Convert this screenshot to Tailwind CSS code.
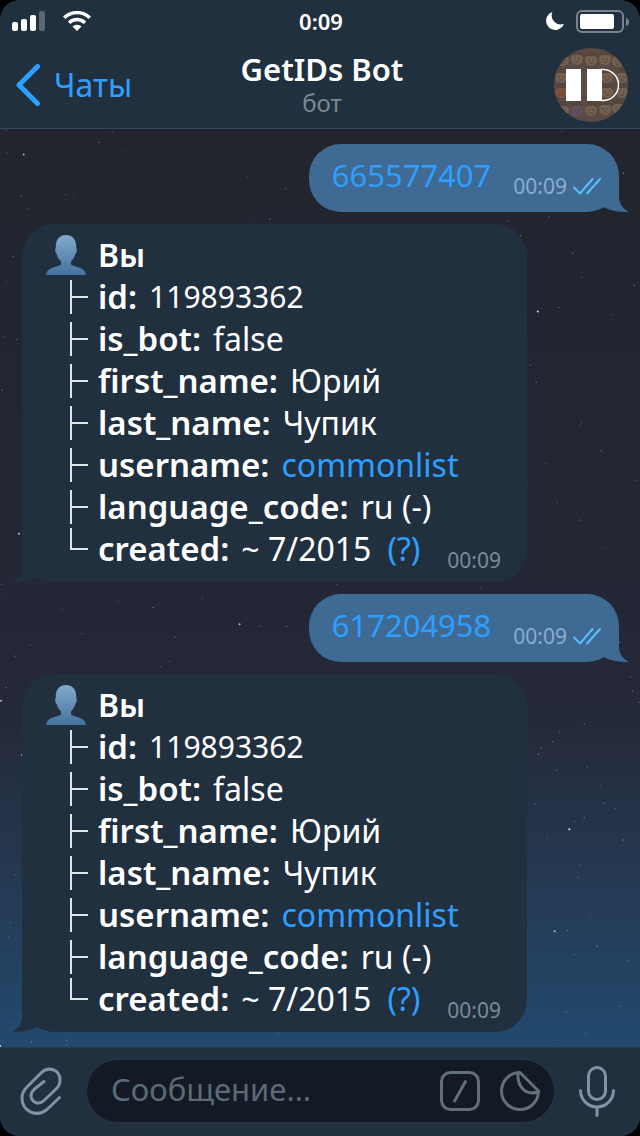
<!DOCTYPE html>
<html lang="ru">
<head>
    <meta charset="UTF-8">
    <meta name="viewport" content="width=device-width, initial-scale=1.0">
    <title>GetIDs Bot</title>
    <script src="https://cdn.jsdelivr.net/npm/@tailwindcss/browser@4"></script>
</head>
<body class="bg-black font-['Noto_Sans','Noto_Sans_CJK_JP',sans-serif]">
<div class="relative isolate min-h-screen flex flex-col rounded-[20px] overflow-hidden bg-linear-to-b from-[#22242e] from-15% via-[#242837] via-62% to-[#214c72] to-94%">

    <!-- Star field -->
    <svg id="stars" class="absolute inset-0 w-full h-full -z-10" aria-hidden="true"></svg>

    <!-- Header -->
    <header class="bg-[#21303f] border-b border-[#34495e] h-[129px] flex flex-col">
        <div class="grid grid-cols-3 items-center h-[42px] pl-3 pr-[10px] text-white">
            <div class="flex items-center gap-[18px]">
                <svg class="w-[33px] h-[20px]" viewBox="0 0 33 20" fill="#fff"><rect x="0" y="11" width="6" height="9" rx="2"/><rect x="9" y="8" width="6" height="12" rx="2"/><rect x="18" y="4" width="6" height="16" rx="2"/><rect x="27" y="0" width="6" height="20" rx="2" fill="#5e6670"/></svg>
                <svg class="w-7 h-5" viewBox="0 0 28 20" fill="none" stroke="#fff" stroke-width="3.4"><path d="M1.2 6.8a18.2 18.2 0 0 1 25.6 0"/><path d="M6 11.8a11.4 11.4 0 0 1 16 0"/><path d="M9.5 15.5a6.4 6.4 0 0 1 9 0L14 20z" fill="#fff" stroke="none"/></svg>
            </div>
            <div class="text-center text-[22px] leading-7 font-semibold">0:09</div>
            <div class="flex items-center justify-end gap-3">
                <svg class="w-[18px] h-[18px]" viewBox="0 0 18 18" fill="#fff"><path d="M6.4 0A9.2 9.2 0 1 0 18 11.8 9 9 0 0 1 6.4 0z"/></svg>
                <svg class="w-[54px] h-[23px]" viewBox="0 0 54 23"><rect x="1" y="1" width="46" height="21" rx="5" fill="none" stroke="#7a838e" stroke-width="2"/><rect x="4" y="4" width="34" height="15" rx="2" fill="#fff"/><path d="M50 8c4 1 4 7 0 8z" fill="#7a838e"/></svg>
            </div>
        </div>
        <div class="grid grid-cols-[1fr_auto_1fr] items-center flex-1 pl-4 pr-3">
            <a href="#" class="flex items-center gap-[14px] text-[#2f9fff] text-[32px] leading-10">
                <svg class="w-6 h-[42px]" viewBox="0 0 24 42" fill="none" stroke="currentColor" stroke-width="5" stroke-linecap="round" stroke-linejoin="round"><path d="M21.500 2.500 3 21l18.500 18.500"/></svg>
                Чаты
            </a>
            <div class="text-center pb-1">
                <h1 class="text-white text-[31px] leading-10 font-semibold">GetIDs Bot</h1>
                <p class="text-[#7c8896] text-[24px] leading-7">бот</p>
            </div>
            <svg class="w-[74px] h-[74px] justify-self-end" viewBox="0 0 74 74" role="img" aria-label="GetIDs Bot">
                <defs>
                    <clipPath id="round"><circle cx="37" cy="37" r="37"/></clipPath>
                    <g id="face"><circle r="6"/><path d="M-6-3a6 6 0 0 1 12 0l-3-1h-6z" fill="#54453d"/><path d="M-3 0h2M1 0h2M-2 3h4" stroke="#54453d"/></g>
                </defs>
                <g clip-path="url(#round)">
                    <rect width="74" height="74" fill="#5a4a44"/>
                    <g fill="#74604f">
                        <use href="#face" x="9" y="12"/><use href="#face" x="23" y="11"/><use href="#face" x="37" y="12"/><use href="#face" x="51" y="11"/><use href="#face" x="64" y="13"/>
                        <use href="#face" x="7" y="29"/><use href="#face" x="53" y="29"/><use href="#face" x="68" y="29"/>
                        <use href="#face" x="7" y="44" fill="#80503d"/><use href="#face" x="53" y="44"/><use href="#face" x="68" y="44"/>
                        <use href="#face" x="9" y="62"/><use href="#face" x="23" y="62" fill="#5f5162"/><use href="#face" x="37" y="62"/><use href="#face" x="51" y="61"/><use href="#face" x="64" y="60"/>
                    </g>
                </g>
                <path d="M12 21h15v32H12zM33 21h15v32H33z" fill="#fff"/>
                <path d="M47 21.500h2a15.500 15.500 0 0 1 0 31h-2" fill="none" stroke="#fff" stroke-width="1.500"/>
            </svg>
        </div>
    </header>

    <!-- Messages -->
    <main id="chat" class="flex-1 flex flex-col gap-3 pt-[15px] pb-[15px] pl-[22px] pr-[21px]"></main>

    <!-- Message input -->
    <form class="bg-[#21303f] border-t border-[#2b3a48] h-[89px] flex items-center pl-5 pr-[25px] pb-[2px]">
        <button type="button" aria-label="Прикрепить" class="shrink-0 mr-6">
            <svg class="w-[42px] h-[48px]" viewBox="0 0 42 48" fill="none" stroke="#8093a3" stroke-width="3" stroke-linecap="round" stroke-linejoin="round"><path d="M39.500 30.500 27 42.500C16 51 2 44 2 31c0-5 2-8 5-11L21 6c7-7 19-4 19 7 0 5-2 7-5 10L24 33.500c-6 5.500-13 1-13-5 0-3 1.500-4.500 3.500-6.500L24 14.500"/></svg>
        </button>
        <div class="flex-1 min-w-0 h-16 flex items-center gap-5 rounded-full bg-[#131a25] border border-[#2a3440] pl-6 pr-[14px]">
            <input type="text" aria-label="Сообщение" placeholder="Сообщение…" class="flex-1 min-w-0 pb-1 bg-transparent outline-none text-white text-[31px] leading-10 placeholder:text-[#5c6a77]">
            <button type="button" aria-label="Команды">
                <svg class="w-10 h-10" viewBox="0 0 40 40" fill="none" stroke="#62707c" stroke-width="3" stroke-linecap="round"><rect x="1.500" y="1.500" width="37" height="37" rx="9"/><path d="M25.500 10.500 14.500 30"/></svg>
            </button>
            <button type="button" aria-label="Стикеры">
                <svg class="w-10 h-10" viewBox="0 0 40 40" fill="none" stroke="#62707c" stroke-width="3" stroke-linejoin="round"><path d="M20 1.500A18.500 18.500 0 1 0 38.500 20z"/><path d="M18 2C17 14 24 25 38.500 21"/></svg>
            </button>
        </div>
        <button type="button" aria-label="Голосовое сообщение" class="shrink-0 ml-6">
            <svg class="w-9 h-[51px]" viewBox="0 0 36 51" fill="none" stroke="#8093a3" stroke-width="3" stroke-linecap="round"><rect x="9.500" y="1.500" width="17" height="32" rx="8.500"/><path d="M1.500 24.500a16.500 16.500 0 0 0 33 0M18 41v8.500"/></svg>
        </button>
    </form>
</div>

<template id="outgoing">
    <article class="relative self-end flex items-center h-[68px] rounded-[32px] bg-[#3e6a94] pl-[23px] pr-[18px]">
        <svg class="absolute right-[-10px] bottom-0 w-10 h-[30px]" viewBox="0 0 40 30" fill="#3e6a94"><path d="M30 0v14c0 8 4 13 10 16-10 0-19-1-25-5L8 10V0z"/></svg>
        <a href="#" class="number relative text-[#2f9fff] text-[31px] leading-10 mr-[22px] mb-[6px]"></a>
        <time class="relative text-[#8badcf] text-[21px] leading-7 mt-4 mr-[6px]">00:09</time>
        <svg class="relative w-[28px] h-[17px] mt-4" viewBox="0 0 28 17" fill="none" stroke="#5cbdfb" stroke-width="2" stroke-linecap="round" stroke-linejoin="round"><path d="M1 9.500 7 15.500 19.500 1M14 15.500 27 1"/></svg>
    </article>
</template>

<template id="incoming">
    <article class="relative self-start w-[505px] max-w-full rounded-[32px] bg-[#21303f] pt-[10px] pb-3 pl-6 pr-[26px] text-white text-[32px] leading-[42px]">
        <svg class="absolute left-[-10px] bottom-0 w-10 h-[30px]" viewBox="0 0 40 30" fill="#21303f"><path d="M10 0v14c0 8-4 13-10 16 10 0 19-1 25-5l7-15V0z"/></svg>
        <h2 class="relative flex items-center font-semibold gap-3">
            <svg class="w-10 h-10" viewBox="0 0 40 40" aria-hidden="true"><defs><linearGradient id="bust" x2="0" y2="1"><stop stop-color="#83aacb"/><stop offset="1" stop-color="#44719f"/></linearGradient></defs><path fill="url(#bust)" d="M20 0c7 0 10.500 5 10.300 13 1 1 .5 5-1 6-1 4-3 6-4.300 7.500v3c4 3 14 2 15 10.500H0c1-8.500 11-7.500 15-10.500v-3c-1.500-1.500-3.500-3.500-4.300-7.500-1.500-1-2-5-1-6C9.500 5 13 0 20 0z"/></svg>
            Вы
        </h2>
        <ul class="relative"></ul>
        <time class="absolute right-[26px] bottom-2 text-[#7b8a98] text-[21px] leading-7">00:09</time>
    </article>
</template>

<template id="row">
    <li class="flex items-center h-[42px]">
        <svg class="w-[18px] h-[42px] ml-6 mr-[10px] shrink-0" viewBox="0 0 18 42" fill="none" stroke="#e2e5e7" stroke-width="2" aria-hidden="true"><path class="branch"/></svg>
        <b class="key font-semibold text-[33px] mr-3"></b>
        <span class="value"></span>
        <a href="#" class="link text-[#2f9fff]"></a>
    </li>
</template>

<script>
    const chat = document.getElementById('chat');

    // [key, value, link]
    const info = [
        ['id:', '119893362', ''],
        ['is_bot:', 'false', ''],
        ['first_name:', 'Юрий', ''],
        ['last_name:', 'Чупик', ''],
        ['username:', '', 'commonlist'],
        ['language_code:', 'ru (-)', ''],
        ['created:', '~ 7/2015', '(?)'],
    ];

    function clone(id) {
        return document.getElementById(id).content.firstElementChild.cloneNode(true);
    }

    ['665577407', '617204958'].forEach(number => {
        const out = clone('outgoing');
        out.querySelector('.number').textContent = number;
        chat.appendChild(out);

        const reply = clone('incoming');
        info.forEach(([key, value, link], i) => {
            const row = clone('row');
            const last = i === info.length - 1;
            row.querySelector('.branch').setAttribute('d', last ? 'M1 0v21h17' : 'M1 4v34M1 21h17');
            row.querySelector('.key').textContent = key;
            row.querySelector('.value').textContent = value;
            row.querySelector('.link').textContent = link;
            if (/^\d+$/.test(value)) row.querySelector('.value').classList.add('text-[30px]');
            if (!link) row.querySelector('.link').remove();
            else if (value) row.querySelector('.link').classList.add('ml-4');
            reply.querySelector('ul').appendChild(row);
        });
        chat.appendChild(reply);
    });

    // Stars: fixed seed so that the sky is the same on every load
    let seed = 7;
    const rand = () => (seed = (seed * 16807) % 2147483647) / 2147483647;
    const stars = document.getElementById('stars');
    for (let i = 0; i < 420; i++) {
        const star = document.createElementNS('http://www.w3.org/2000/svg', 'circle');
        star.setAttribute('cx', rand() * 100 + '%');
        star.setAttribute('cy', rand() * 100 + '%');
        star.setAttribute('r', i % 12 ? 0.6 : 1);
        star.setAttribute('fill', i % 5 ? '#b9d3ea' : '#ffffff');
        star.setAttribute('opacity', i % 12 ? 0.2 + rand() * 0.4 : 0.9);
        stars.appendChild(star);
    }
</script>
</body>
</html>
